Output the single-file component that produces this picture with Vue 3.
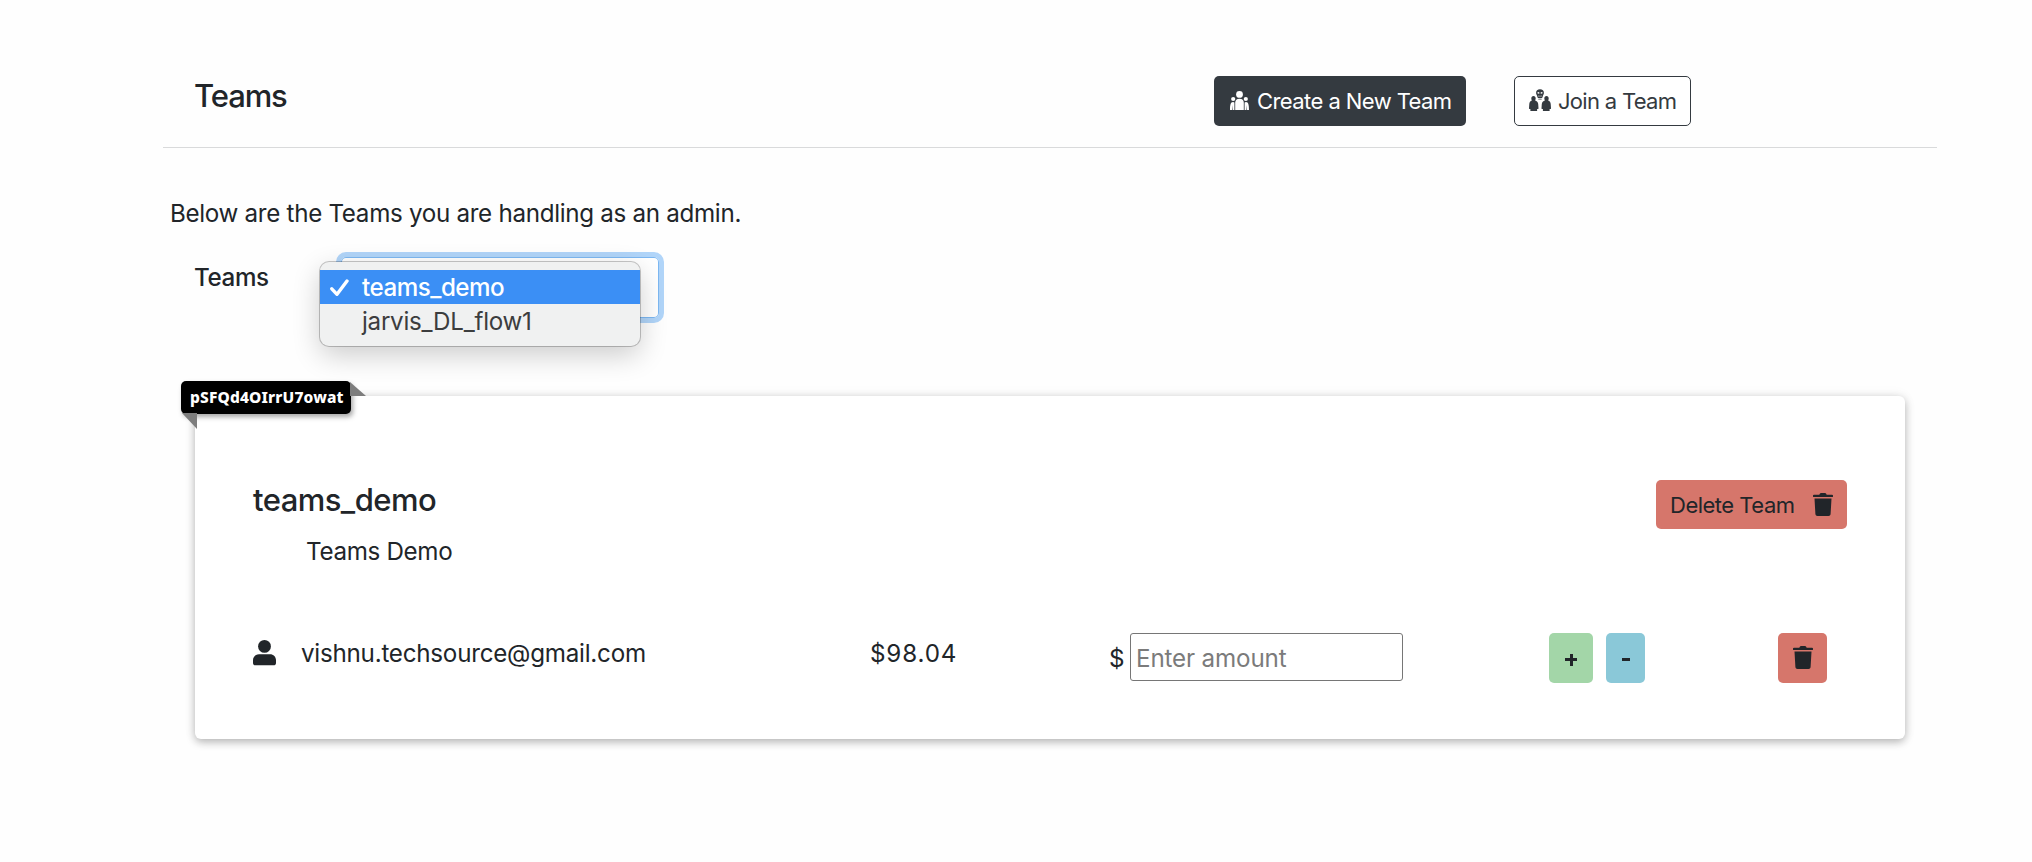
<script setup>
import { ref } from 'vue'

const teams = ['teams_demo', 'jarvis_DL_flow1']
const selected = ref('teams_demo')
const amount = ref('')
</script>

<template>
  <main class="page">
    <header class="header">
      <h5 class="title">Teams</h5>
      <button class="btn dark">
        <svg class="ic-team" width="19" height="19" viewBox="0 0 19 19" fill="currentColor">
          <circle cx="9.5" cy="3.4" r="3.4" />
          <circle cx="3.2" cy="8" r="2.1" />
          <circle cx="15.8" cy="8" r="2.1" />
          <path d="M5.2 19v-7.200c0-2.600 1.500-4 4.300-4s4.300 1.400 4.300 4V19z" />
          <path d="M0 19c0-4.500.5-8 3-8 .6 0 1.100.2 1.400.5V19H2.600v-5L2 19z" />
          <path d="M19 19c0-4.500-.5-8-3-8-.6 0-1.100.2-1.400.5V19h1.800v-5l.6 5z" />
        </svg>
        <span class="create-text">Create a New Team</span>
      </button>
      <button class="btn light">
        <svg class="ic-join" width="22" height="22" viewBox="0 0 22 22" fill="currentColor">
          <path d="M4.500 7c1.400 0 2.200 1 2.200 2.300 0 1-.3 1.600-.6 2.200 1.700.6 3 1.600 3.100 3.500l.3 4.200c0 .6-.5.9-1.400.9V22H1.400v-1.900C.5 20.100 0 19.800 0 19.200L.3 15c.1-1.900 1-2.900 2.600-3.500-.4-.6-.6-1.200-.6-2.200C2.300 8 3.100 7 4.500 7z" />
          <path d="M17.500 7c-1.400 0-2.200 1-2.200 2.300 0 1 .3 1.600.6 2.200-1.700.6-3 1.600-3.100 3.500l-.3 4.200c0 .6.5.9 1.400.9V22h6.700v-1.900c.9 0 1.400-.3 1.400-.9l-.3-4.200c-.1-1.900-1-2.900-2.600-3.500.4-.6.6-1.200.6-2.200C19.700 8 18.900 7 17.500 7z" />
          <path fill-rule="evenodd" d="M11 .3c2.500 0 3.900 1.400 3.900 3.500 0 1.300-.5 2-1 2.900-.2.500-.3 1.300-.5 1.900-.2.500-.6.700-1.100.7H9.700c-.5 0-.9-.2-1.100-.7-.2-.6-.3-1.400-.5-1.900-.5-.9-1-1.600-1-2.900C7.100 1.700 8.500.3 11 .3zM8.600 3v1.400l1.700.4V3.300zm4.800 0-1.700.3v1.500l1.700-.4zM9.700 6.200v1.900h.6V6.400zm2 .2v1.700h.6V6.200z" />
          <path d="M9.300 10h3.400v.8H9.300z" opacity=".6" />
        </svg>
        <span class="join-text">Join a Team</span>
      </button>
    </header>

    <p class="intro">Below are the Teams you are handling as an admin.</p>

    <section class="picker">
      <label class="picker-label">Teams</label>
      <div class="select">
        <ul class="menu">
          <li
            v-for="t in teams"
            :key="t"
            :class="{ active: t === selected }"
            @click="selected = t"
          >
            <span class="mark">
              <svg v-if="t === selected" width="19" height="18" viewBox="0 0 19 18">
                <path d="M1.800 9.800 7 15.300 17 2" fill="none" stroke="#fff" stroke-width="3.400" stroke-linecap="round" stroke-linejoin="round" />
              </svg>
            </span>
            <span class="option">{{ t }}</span>
          </li>
        </ul>
      </div>
    </section>

    <section class="card">
      <div class="badge"><span>pSFQd4OIrrU7owat</span></div>
      <div class="card-head">
        <div>
          <h5 class="team-name">teams_demo</h5>
          <p class="team-desc">Teams Demo</p>
        </div>
        <button class="delete">
          <span>Delete Team</span>
          <svg width="20" height="24" viewBox="0 0 20 24" fill="currentColor">
            <path d="M1 1.800h5.300L7 .6C7.200.2 7.500 0 8 0h4c.5 0 .8.2 1 .6l.7 1.200H19c.6 0 1 .3 1 .8v.8c0 .4-.3.700-.8.700H.8C.3 4.100 0 3.800 0 3.400v-.8c0-.5.4-.8 1-.8zM1.500 5.600h17l-.9 15.500c-.1 1.200-.9 1.900-2.100 1.900h-11c-1.200 0-2-.7-2.100-1.900z" />
          </svg>
        </button>
      </div>
      <div class="member">
        <svg class="user" width="23" height="26" viewBox="0 0 23 26" fill="currentColor">
          <circle cx="11.500" cy="6.400" r="6.400" />
          <path d="M6 14.200h11c3.500 0 6 2.600 6 6v2.700c0 1.400-1 2.300-2.300 2.300H2.300C1 25.200 0 24.300 0 22.900v-2.700c0-3.400 2.500-6 6-6z" />
        </svg>
        <span class="email">vishnu.techsource@gmail.com</span>
        <span class="balance">$98.04</span>
        <span class="dollar">$</span>
        <input v-model="amount" class="amount" placeholder="Enter amount" />
        <button class="sq plus"><i class="bar" /><i class="bar vertical" /></button>
        <button class="sq minus"><i class="bar" /></button>
        <button class="sq remove">
          <svg width="20" height="24" viewBox="0 0 20 24" fill="currentColor">
            <path d="M1 1.800h5.300L7 .6C7.200.2 7.500 0 8 0h4c.5 0 .8.2 1 .6l.7 1.200H19c.6 0 1 .3 1 .8v.8c0 .4-.3.700-.8.700H.8C.3 4.100 0 3.800 0 3.400v-.8c0-.5.4-.8 1-.8zM1.500 5.600h17l-.9 15.500c-.1 1.200-.9 1.900-2.100 1.900h-11c-1.200 0-2-.7-2.100-1.900z" />
          </svg>
        </button>
      </div>
    </section>
  </main>
</template>

<style>
body {
  margin: 0;
  background: #fefefe;
}
</style>

<style scoped>
* {
  box-sizing: border-box;
}
.page {
  width: 2032px;
  height: 862px;
  overflow: hidden;
  font-family: Inter, "Liberation Sans", sans-serif;
  font-size: 24.2px;
  line-height: 36px;
  color: #212529;
  white-space: nowrap;
}
button,
input {
  font: inherit;
  color: inherit;
  border: 0;
  padding: 0;
  margin: 0;
}
h5,
p,
ul {
  margin: 0;
  padding: 0;
}
.header {
  display: flex;
  align-items: flex-start;
  height: 148px;
  margin: 0 95px 0 163px;
  padding: 76px 0 0 31px;
  border-bottom: 1px solid #d9dadb;
}
.title {
  width: 1020px;
  padding-top: 1px;
  font-size: 31px;
  font-weight: 500;
  line-height: 37px;
  letter-spacing: -1.1px;
}
.btn {
  display: flex;
  align-items: center;
  height: 50px;
  border-radius: 5px;
  font-size: 22px;
}
.dark {
  width: 252px;
  padding-left: 16px;
  background: #343a40;
  color: #fff;
  letter-spacing: -0.57px;
}
.light {
  width: 177px;
  margin-left: 48px;
  padding-left: 14px;
  border: 1px solid #343a40;
  background: #fff;
  color: #343a40;
  letter-spacing: -0.7px;
}
.ic-team {
  margin: 0 8px 2px 0;
}
.ic-join {
  margin: 0 7px 2px 0;
}
.intro {
  margin: 48px 0 0 170px;
  letter-spacing: -0.31px;
}
.picker {
  display: flex;
  height: 71px;
  margin: 20px 0 0 194px;
}
.picker-label {
  width: 142px;
  padding-top: 8px;
  font-weight: 500;
  letter-spacing: -0.4px;
}
.select {
  position: relative;
  width: 328px;
  height: 71px;
  border: 5px solid #b1d5f9;
  border-radius: 10px;
  background: #fff;
  box-shadow: inset 0 0 0 1px #7db8f2;
}
.menu {
  position: absolute;
  z-index: 2;
  left: -21px;
  top: 5px;
  width: 320px;
  height: 84px;
  padding-top: 8px;
  border-radius: 9px;
  background: #f0f1f1;
  list-style: none;
  box-shadow: 0 0 0 1px rgba(0, 0, 0, 0.22), 0 9px 28px rgba(0, 0, 0, 0.2);
}
.menu li {
  display: flex;
  align-items: center;
  height: 34px;
  line-height: 34px;
  color: #3c3d3e;
  letter-spacing: -0.27px;
}
.menu li.active {
  background: #3b8ff5;
  color: #fff;
  font-weight: 500;
  letter-spacing: -0.5px;
}
.mark,
.option {
  padding-top: 2px;
}
.mark {
  display: flex;
  width: 42px;
  padding-left: 10px;
}
.card {
  position: relative;
  width: 1710px;
  height: 343px;
  margin: 73px 0 0 195px;
  padding: 84px 58px 0;
  border-radius: 6px;
  background: #fff;
  box-shadow: 0 3px 8px rgba(0, 0, 0, 0.27), 0 0 14px rgba(0, 0, 0, 0.06);
}
.badge {
  position: absolute;
  left: -14px;
  top: -15px;
  width: 170px;
  height: 33px;
  padding-left: 9px;
  border-radius: 5px;
  background: #000;
  color: #fff;
  font-family: "Noto Sans", sans-serif;
  font-size: 15.5px;
  font-weight: 800;
  line-height: 33px;
  letter-spacing: 0.15px;
  box-shadow: 2px 3px 5px rgba(0, 0, 0, 0.35);
}
.badge::before,
.badge::after {
  content: "";
  position: absolute;
  background: #7d7d7d;
}
.badge::before {
  left: 169px;
  top: 1px;
  width: 16px;
  height: 14px;
  clip-path: polygon(0 0, 100% 100%, 0 100%);
}
.badge::after {
  left: 1px;
  top: 32px;
  width: 15px;
  height: 16px;
  clip-path: polygon(0 0, 100% 0, 100% 100%);
}
.card-head {
  display: flex;
  justify-content: space-between;
  height: 153px;
}
.team-name {
  padding-top: 1px;
  font-size: 31px;
  font-weight: 500;
  line-height: 37px;
  letter-spacing: -0.55px;
}
.team-desc {
  margin: 16px 0 0 53px;
  letter-spacing: -0.33px;
}
.delete {
  display: flex;
  align-items: center;
  justify-content: space-between;
  width: 191px;
  height: 49px;
  padding: 0 14px;
  border-radius: 5px;
  background: #d6766b;
  font-size: 22px;
  letter-spacing: -0.5px;
}
.member {
  display: flex;
  align-items: flex-start;
}
.member > * {
  flex-shrink: 0;
}
.user {
  margin-top: 7px;
}
.email {
  width: 569px;
  margin-left: 25px;
  padding-top: 3px;
  letter-spacing: -0.24px;
}
.balance {
  width: 239px;
  padding-top: 3px;
  letter-spacing: 0.85px;
}
.dollar {
  width: 21px;
  padding-top: 8px;
}
.amount {
  width: 273px;
  height: 48px;
  padding: 2px 0 0 5px;
  border: 1px solid #767676;
  border-radius: 3px;
  background: #fff;
  outline: none;
  letter-spacing: -0.15px;
}
.amount::placeholder {
  color: #7b7b7b;
  opacity: 1;
}
.sq {
  position: relative;
  display: grid;
  place-items: center;
  height: 50px;
  border-radius: 5px;
}
.plus {
  width: 44px;
  margin-left: 146px;
  background: #a3d6a8;
}
.minus {
  width: 39px;
  margin-left: 13px;
  background: #8ac8d8;
}
.remove {
  width: 49px;
  margin-left: 133px;
  background: #d6766b;
}
.bar {
  grid-area: 1 / 1;
  width: 12px;
  height: 3px;
  margin-top: 3px;
  background: #212529;
}
.minus .bar {
  width: 8px;
}
.bar.vertical {
  width: 3px;
  height: 12px;
}
</style>
